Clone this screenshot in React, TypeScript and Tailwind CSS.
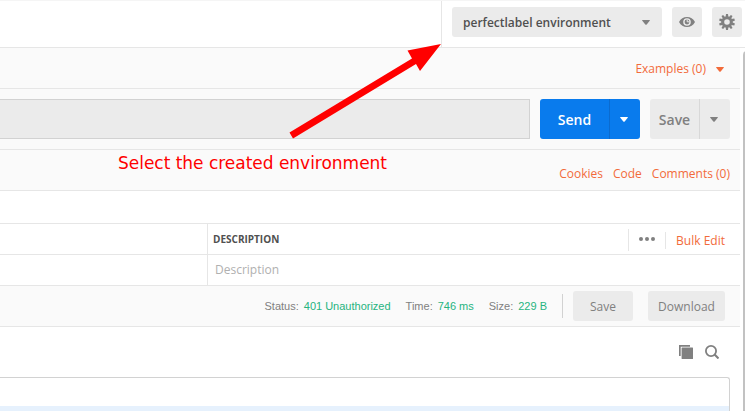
import React from "react";

function Caret({ className = "" }: { className?: string }) {
  return (
    <svg width="8" height="5" viewBox="0 0 8 5" className={`shrink-0 ${className}`} fill="currentColor">
      <path d="M0.6 0H7.4Q8.3 0 7.7 0.8L4.7 4.5Q4 5.2 3.3 4.5L0.3 0.8Q-0.3 0 0.6 0Z" />
    </svg>
  );
}

function EyeIcon() {
  return (
    <svg width="16" height="10" viewBox="0 0 16 10">
      <path
        fill="#808080"
        fillRule="evenodd"
        d="M0 5C1.7 1.8 4.6 0 8 0s6.3 1.8 8 5c-1.7 3.2-4.6 5-8 5S1.700 8.200 0 5ZM8 1.200a3.800 3.800 0 1 0 0 7.600a3.800 3.800 0 0 0 0-7.600Z"
      />
      <circle cx="8" cy="5" r="2.400" fill="#808080" />
      <path d="M8.200 2.600V4.800H10.400" stroke="#ebebeb" strokeWidth="1" fill="none" />
    </svg>
  );
}

const teeth = [0, 36, 72, 108, 144, 180, 216, 252, 288, 324];

function GearIcon() {
  return (
    <svg width="16" height="16" viewBox="0 0 16 16">
      <g fill="#808080">
        {teeth.map((a) => (
          <path key={a} d="M6.600 3L7 0H9L9.400 3Z" transform={`rotate(${a} 8 8)`} />
        ))}
      </g>
      <circle cx="8" cy="8" r="4.300" fill="none" stroke="#808080" strokeWidth="3" />
    </svg>
  );
}

function CopyIcon() {
  return (
    <svg width="14" height="14" viewBox="0 0 14 14" fill="#808080">
      <path d="M0 0H11V1.700H1.700V11H0Z" />
      <rect x="2.600" y="2.600" width="11.400" height="11.400" rx="0.500" />
    </svg>
  );
}

function SearchIcon() {
  return (
    <svg width="14" height="14" viewBox="0 0 14 14" fill="none" stroke="#808080">
      <circle cx="6" cy="6" r="5.100" strokeWidth="1.800" />
      <path d="M9.600 9.600L13.500 13.500" strokeWidth="2.100" />
    </svg>
  );
}

function Stat({ label, value }: { label: string; value: string }) {
  return (
    <div className="flex gap-[5px]">
      <span className="text-[#808080]">{label}</span>
      <span className="text-[#26b47f]">{value}</span>
    </div>
  );
}

export default function App() {
  return (
    <div className="relative h-[411px] w-[745px] overflow-hidden bg-white font-['Open_Sans',sans-serif] text-xs whitespace-nowrap text-[#808080]">
      <header className="flex h-12 border-t border-b border-t-[#f5f5f5] border-b-[#e6e6e6]">
        <div className="w-[441px] shrink-0" />
        <div className="flex flex-1 gap-[10px] border-l border-[#e6e6e6] pt-[6px] pl-[10px]">
          <button className="flex h-[30px] w-[210px] items-center justify-between rounded-[3px] bg-[#ebebeb] pr-3 pl-[11px] font-semibold text-[#505050]">
            <span className="pt-[2px]">perfectlabel environment</span>
            <Caret className="text-[#808080]" />
          </button>
          <button className="flex size-[30px] items-center justify-center rounded-[3px] bg-[#ebebeb]">
            <EyeIcon />
          </button>
          <button className="flex size-[30px] items-center justify-center rounded-[3px] bg-[#ebebeb]">
            <GearIcon />
          </button>
        </div>
      </header>

      <div className="flex">
        <main className="w-[740px] shrink-0">
          <section className="flex h-[41px] items-center justify-end border-b border-[#e6e6e6] bg-[#fafafa] pt-[2px] pr-4 text-[#f26b3a]">
            <span className="mr-[10px]">Examples (0)</span>
            <Caret />
          </section>

          <section className="flex h-[61px] items-center border-b border-[#e6e6e6] bg-[#fafafa] text-sm">
            <div className="h-10 w-[530px] border border-l-0 border-[#d2d2d2] bg-[#ebebeb]" />
            <div className="ml-[10px] flex h-10 w-[100px] overflow-hidden rounded-[3px] bg-[#097bed] text-white">
              <button className="w-[70px] border-r border-[#0a6bd0] pt-[2px] font-semibold">Send</button>
              <button className="flex flex-1 items-center justify-center pr-[2px]">
                <Caret />
              </button>
            </div>
            <div className="ml-[10px] flex h-10 w-20 overflow-hidden rounded-[3px] bg-[#ebebeb]">
              <button className="w-[50px] border-r border-[#d8d8d8] pt-[2px] font-semibold">Save</button>
              <button className="flex flex-1 items-center justify-center pr-[2px]">
                <Caret />
              </button>
            </div>
          </section>

          <section className="flex h-[41px] items-center justify-end gap-[10px] border-b border-[#e6e6e6] bg-[#fafafa] pt-[7px] pr-[10px] text-[#f26b3a]">
            <span>Cookies</span>
            <span>Code</span>
            <span>Comments (0)</span>
          </section>

          <div className="h-8" />
          <section className="border-t border-[#e6e6e6]">
            <div className="flex h-[31px] border-b border-[#e6e6e6]">
              <div className="w-[207px]" />
              <div className="flex flex-1 items-center border-l border-[#e6e6e6] pl-[5px]">
                <span className="flex-1 pt-[2px] text-[10px] font-bold text-[#505050]">DESCRIPTION</span>
                <div className="mt-[2px] h-[22px] w-px bg-[#e6e6e6]" />
                <svg width="16" height="4" viewBox="0 0 16 4" className="mr-[10px] ml-[10px]" fill="#808080">
                  <circle cx="2" cy="2" r="2" />
                  <circle cx="8" cy="2" r="2" />
                  <circle cx="14" cy="2" r="2" />
                </svg>
                <div className="mt-[3px] h-[17px] w-px bg-[#e6e6e6]" />
                <span className="mt-1 mr-[15px] ml-[10px] text-[#f26b3a]">Bulk Edit</span>
              </div>
            </div>
            <div className="flex h-[31px] border-b border-[#e6e6e6]">
              <div className="w-[207px]" />
              <div className="flex flex-1 items-center border-l border-[#e6e6e6] pl-[7px] text-[#b0b0b0]">Description</div>
            </div>
          </section>

          <section className="flex h-[41px] items-center justify-end border-b border-[#e6e6e6] bg-[#fafafa] pr-[15px]">
            <div className="flex gap-[15px] font-['Liberation_Sans',sans-serif] text-[11px]">
              <Stat label="Status:" value="401 Unauthorized" />
              <Stat label="Time:" value="746 ms" />
              <Stat label="Size:" value="229 B" />
            </div>
            <div className="ml-[15px] h-6 w-px bg-[#d2d2d2]" />
            <button className="ml-[10px] h-[30px] w-[60px] rounded-[3px] bg-[#ebebeb] pt-[2px]">Save</button>
            <button className="ml-[15px] h-[30px] w-[77px] rounded-[3px] bg-[#ebebeb] pt-[2px]">Download</button>
          </section>

          <section className="flex h-[50px] items-center justify-end gap-3 pr-[21px]">
            <CopyIcon />
            <SearchIcon />
          </section>

          <div className="h-[34px] w-[730px] overflow-hidden rounded-tr-[3px] border-t border-r border-[#d2d2d2] pt-7">
            <div className="h-[6px] bg-[#e6f1fd]" />
          </div>
        </main>
        <div className="mt-[3px] ml-[3px] h-[370px] w-2 shrink-0 rounded-t-[4px] bg-[#c2c2c2]" />
      </div>

      <svg className="absolute top-0 left-0" width="745" height="200" viewBox="0 0 745 200" fill="#ff0000">
        <path d="M441 44L420 71L416 64L293 138.500L289.500 132.500L412 58.500L407.500 50.500Z" />
      </svg>
      <p className="absolute top-[151px] left-[118px] font-['DejaVu_Sans',sans-serif] text-[17px] leading-6 tracking-[-0.02px] text-[#ff0000]">
        Select the created environment
      </p>
    </div>
  );
}
